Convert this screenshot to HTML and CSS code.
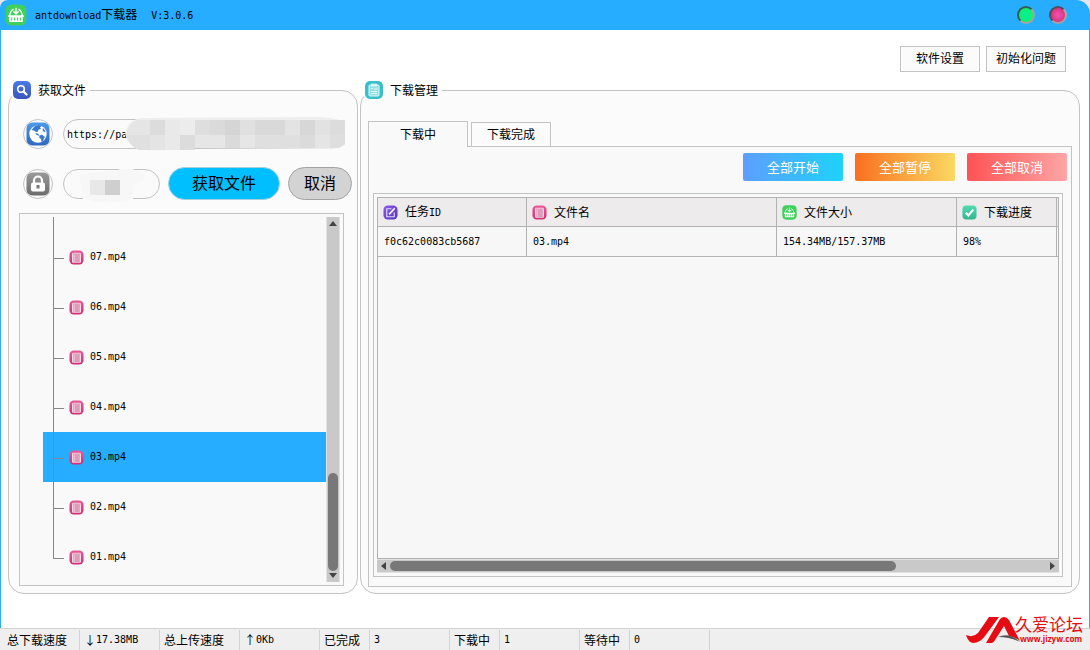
FILE: index.html
```html
<!DOCTYPE html>
<html lang="zh-CN">
<head>
<meta charset="utf-8">
<title>antdownload下载器</title>
<link rel="stylesheet" href="styles.css">
</head>
<body>
<svg class="defs" aria-hidden="true">
  <defs>
    <linearGradient id="gPink" x1="0" y1="0" x2="0" y2="1"><stop offset="0" stop-color="#e85a9a"/><stop offset="1" stop-color="#cf2f74"/></linearGradient>
    <linearGradient id="gBlue" x1="0" y1="0" x2="0" y2="1"><stop offset="0" stop-color="#4a7ae2"/><stop offset="1" stop-color="#3a55bd"/></linearGradient>
    <linearGradient id="gGlobe" x1="0" y1="0" x2="0" y2="1"><stop offset="0" stop-color="#4c9aea"/><stop offset="1" stop-color="#2f68bd"/></linearGradient>
    <linearGradient id="gGray" x1="0" y1="0" x2="0" y2="1"><stop offset="0" stop-color="#9a9a9a"/><stop offset="1" stop-color="#6c6c6c"/></linearGradient>
    <linearGradient id="gViolet" x1="0" y1="0" x2="1" y2="1"><stop offset="0" stop-color="#8a5cf0"/><stop offset="1" stop-color="#5634b4"/></linearGradient>
    <linearGradient id="gMint" x1="0" y1="0" x2="0" y2="1"><stop offset="0" stop-color="#4fdcae"/><stop offset="1" stop-color="#34b58c"/></linearGradient>
    <symbol id="file" viewBox="0 0 16 16">
      <rect x=".5" y=".5" width="15" height="15" rx="4.5" fill="url(#gPink)"/>
      <rect x="3.2" y="3" width="9.6" height="10.5" rx="1" fill="#f6dbe6"/>
      <rect x="6" y="4.5" width="5.5" height="8.5" fill="#dc9cba"/>
      <path d="M4 4.2h8.5M5 4v9" stroke="#e28bb2" stroke-width=".8"/>
    </symbol>
    <symbol id="basket" viewBox="0 0 22 22">
      <rect x=".5" y=".5" width="21" height="21" rx="6" fill="#3fcf5b"/>
      <path d="M8.500 5.200C6 6.500 5 8.500 4.600 12M13.500 5.200C16 6.500 17 8.500 17.400 12" stroke="#fff" stroke-width="1.300" fill="none"/>
      <path d="M11 3.800v5.500M8.300 7.200L11 9.900l2.700-2.700" stroke="#fff" stroke-width="1.400" fill="none"/>
      <path d="M3.200 11.200h15.600v1.900h-1V18H4.200v-4.900h-1z" fill="#fff"/>
      <path d="M6.700 13.600v3M9.600 13.600v3M12.500 13.600v3M15.400 13.600v3" stroke="#3fcf5b" stroke-width="1.100"/>
    </symbol>
    <symbol id="search" viewBox="0 0 18 18">
      <rect width="18" height="18" rx="5" fill="url(#gBlue)"/>
      <circle cx="8" cy="8" r="3.300" fill="none" stroke="#fff" stroke-width="1.600"/>
      <path d="M10.500 10.500L13.500 13.500" stroke="#fff" stroke-width="2.200" stroke-linecap="round"/>
    </symbol>
    <symbol id="clip" viewBox="0 0 18 18">
      <rect width="18" height="18" rx="5" fill="#38bfc9"/>
      <rect x="4" y="4" width="10" height="11" rx="1" fill="#8fdfe4" stroke="#e5fafb"/>
      <path d="M7 2.500v3M9 2.500v3M11 2.500v3" stroke="#fff" stroke-width="1.200"/>
      <path d="M6 7.500h2M9 8h3.500M6 10.500h6M6 12.500h6" stroke="#e9fbfc"/>
    </symbol>
    <symbol id="globe" viewBox="0 0 24 24">
      <rect x=".5" y=".5" width="23" height="23" rx="6" fill="url(#gGlobe)"/>
      <circle cx="12" cy="12" r="8.700" fill="#fff"/>
      <path d="M9 4l3.500-1 3 1-1.500 1.500 1 1.500-2.500.5-.5 2-2 .5L8 8.500 5.500 8z" fill="#3778cc"/>
      <path d="M9.500 11l2 .5 2 1.500-1 .7-2.500-1.200z" fill="#3778cc"/>
      <path d="M13.500 13.500l2.500-.8 3 2.300-1.300 1.800-.4 2.400-1.800.8-.5-3-1.800-1.500zM17 6l2.700 3.500-1.700.5-1.500-2z" fill="#3778cc"/>
    </symbol>
    <symbol id="lock" viewBox="0 0 24 24">
      <rect x=".5" y=".5" width="23" height="23" rx="6" fill="url(#gGray)"/>
      <path d="M8 11V8.500a4 4 0 0 1 8 0V11" fill="none" stroke="#fff" stroke-width="2.200"/>
      <rect x="5" y="10.500" width="14" height="9" rx="2" fill="#fff"/>
      <path d="M10.500 13h3v3.500h-3z" fill="#777"/>
    </symbol>
    <symbol id="edit" viewBox="0 0 16 16">
      <rect x=".5" y=".5" width="15" height="15" rx="4.500" fill="url(#gViolet)"/>
      <path d="M9 4H4v8.500h8V8" fill="none" stroke="#e4daff" stroke-width="1.200"/>
      <path d="M6.500 10L12.500 3.500" stroke="#fff" stroke-width="1.800"/>
    </symbol>
    <symbol id="check" viewBox="0 0 16 16">
      <rect x=".5" y=".5" width="15" height="15" rx="4" fill="url(#gMint)"/>
      <path d="M4 8.200l2.800 3L12 5" fill="none" stroke="#fff" stroke-width="2.200"/>
    </symbol>
  </defs>
</svg>

<div class="window">
  <header class="titlebar">
    <svg class="app-icon"><use href="#basket"/></svg>
    <h1 class="app-name"><span class="latin">antdownload</span>下载器<span class="latin version">V:3.0.6</span></h1>
    <button class="orb orb-green" aria-label="最小化"></button>
    <button class="orb orb-red" aria-label="关闭"></button>
  </header>

  <main class="content">
    <div class="toolbar">
      <button class="plain">软件设置</button>
      <button class="plain">初始化问题</button>
    </div>

    <div class="panels">
      <fieldset class="panel fetch">
        <legend class="caption"><svg class="icon-l"><use href="#search"/></svg>获取文件</legend>
        <div class="row">
          <span class="round"><svg class="icon-xl"><use href="#globe"/></svg></span>
          <div class="field url">
            <input class="pill" type="text" aria-label="链接" value="https://pa">
            <svg class="mask" viewBox="0 0 226 34" preserveAspectRatio="none" aria-hidden="true">
              <path d="M0 16Q4 3 15 1L180 0Q212 -1 220 6V28Q214 32 204 32L70 31Q60 34 14 33Q2 28 0 16z" fill="#eee"/>
              <path d="M1 16Q4 5 13 3H25V18H1z" fill="#e5e5e5"/><path d="M25 3h15v15H25z" fill="#dcdcdc"/><path d="M40 3h15v15H40z" fill="#e9e9e9"/><path d="M55 3h15v15H55z" fill="#ececec"/>
              <path d="M70 3h15v15H70z" fill="#dedede"/><path d="M85 3h15v15H85z" fill="#dadada"/><path d="M100 3h15v15h-15z" fill="#d5d5d5"/><path d="M115 3h15v15h-15z" fill="#e0e0e0"/><path d="M130 3h30v15h-30z" fill="#d9d9d9"/><path d="M160 3h15v15h-15z" fill="#e3e3e3"/><path d="M175 3h15v15h-15z" fill="#d7d7d7"/><path d="M190 3h15v15h-15z" fill="#e2e2e2"/><path d="M205 3h15v15h-15z" fill="#dcdcdc"/>
              <path d="M1 18H25V33H14Q4 29 1 18z" fill="#e0e0e0"/><path d="M25 18h15v15H25z" fill="#e4e4e4"/><path d="M40 18h15v15H40z" fill="#e9e9e9"/><path d="M55 18h15v15H55z" fill="#dcdcdc"/><path d="M70 18h30v13H70z" fill="#e6e6e6"/><path d="M100 18h15v13h-15z" fill="#dadada"/><path d="M115 18h15v13h-15z" fill="#e6e6e6"/><path d="M130 18h45v13h-45z" fill="#dfdfdf"/><path d="M175 18h15v13h-15z" fill="#dbdbdb"/><path d="M190 18h15v13h-15z" fill="#e5e5e5"/><path d="M205 18h15v9l-6 4h-9z" fill="#dedede"/>
            </svg>
          </div>
        </div>
        <div class="row">
          <span class="round"><svg class="icon-xl"><use href="#lock"/></svg></span>
          <div class="field code">
            <input class="pill" type="text" aria-label="提取码">
            <svg class="mask" viewBox="0 0 68 36" aria-hidden="true">
              <path d="M0 8Q20 4 36 4Q48-2 60 5Q68 8 64 14L54 18L54 32Q28 38 4 32z" fill="#f7f7f7"/>
              <path d="M11 13h15v15H11z" fill="#e8e8e8"/><path d="M26 13h15v15H26z" fill="#cfcfcf"/>
            </svg>
          </div>
          <button class="big primary">获取文件</button>
          <button class="big cancel">取消</button>
        </div>
        <div class="tree">
          <ul class="files">
            <li class="file"><span class="branch"></span><svg class="icon-s"><use href="#file"/></svg><span class="latin">07.mp4</span></li>
            <li class="file"><span class="branch"></span><svg class="icon-s"><use href="#file"/></svg><span class="latin">06.mp4</span></li>
            <li class="file"><span class="branch"></span><svg class="icon-s"><use href="#file"/></svg><span class="latin">05.mp4</span></li>
            <li class="file"><span class="branch"></span><svg class="icon-s"><use href="#file"/></svg><span class="latin">04.mp4</span></li>
            <li class="file selected"><span class="branch"></span><svg class="icon-s"><use href="#file"/></svg><span class="latin">03.mp4</span></li>
            <li class="file"><span class="branch"></span><svg class="icon-s"><use href="#file"/></svg><span class="latin">02.mp4</span></li>
            <li class="file"><span class="branch"></span><svg class="icon-s"><use href="#file"/></svg><span class="latin">01.mp4</span></li>
          </ul>
          <div class="vbar">
            <svg class="arrow-v" viewBox="0 0 8 5"><path d="M4 0l4 5H0z"/></svg>
            <span class="vspace"></span><span class="vthumb"></span>
            <svg class="arrow-v" viewBox="0 0 8 5"><path d="M4 5l4-5H0z"/></svg>
          </div>
        </div>
      </fieldset>

      <fieldset class="panel downloads">
        <legend class="caption"><svg class="icon-l"><use href="#clip"/></svg>下载管理</legend>
        <div class="tabs" role="tablist">
          <button class="tab active" role="tab" aria-selected="true">下载中</button>
          <button class="tab" role="tab" aria-selected="false">下载完成</button>
        </div>
        <div class="sheet">
          <div class="actions">
            <button class="action start">全部开始</button>
            <button class="action pause">全部暂停</button>
            <button class="action stop">全部取消</button>
          </div>
          <div class="frame">
            <div class="grid">
              <table class="tasks">
                <colgroup><col class="c-id"><col class="c-name"><col class="c-size"><col class="c-progress"><col></colgroup>
                <thead>
                  <tr>
                    <th><span class="head"><svg class="icon-s"><use href="#edit"/></svg><span>任务<span class="latin">ID</span></span></span></th>
                    <th><span class="head"><svg class="icon-s"><use href="#file"/></svg>文件名</span></th>
                    <th><span class="head"><svg class="icon-s"><use href="#basket"/></svg>文件大小</span></th>
                    <th><span class="head"><svg class="icon-s"><use href="#check"/></svg>下载进度</span></th>
                    <td></td>
                  </tr>
                </thead>
                <tbody>
                  <tr class="latin"><td>f0c62c0083cb5687</td><td>03.mp4</td><td>154.34MB/157.37MB</td><td>98%</td><td></td></tr>
                </tbody>
              </table>
            </div>
            <div class="hbar">
              <svg class="arrow-h" viewBox="0 0 5 8"><path d="M0 4l5-4v8z"/></svg>
              <span class="hthumb"></span><span class="hspace"></span>
              <svg class="arrow-h" viewBox="0 0 5 8"><path d="M5 4L0 0v8z"/></svg>
            </div>
          </div>
        </div>
      </fieldset>
    </div>
  </main>

  <footer class="status">
    <span class="seg wide first">总下载速度</span>
    <span class="seg wide">↓<span class="latin">17.38MB</span></span>
    <span class="seg wide">总上传速度</span>
    <span class="seg wide">↑<span class="latin">0Kb</span></span>
    <span class="seg">已完成</span>
    <span class="seg wide"><span class="latin">3</span></span>
    <span class="seg">下载中</span>
    <span class="seg wide"><span class="latin">1</span></span>
    <span class="seg">等待中</span>
    <span class="seg wide"><span class="latin">0</span></span>
  </footer>

  <div class="brand">
    <svg class="brand-mark" viewBox="0 0 54 27" aria-hidden="true">
      <path d="M23 0h10L19 19Q14 26 7 26Q2 25 0 18Q7 21 12 16z" fill="#e60a12"/>
      <path d="M20 26L34 2Q36 0 38 0Q41 0 43 3L54 24Q49 20 43 19L38 9L29 23Q28 25 26 26z" fill="#e60a12"/>
      <path d="M32 20Q44 15 54 25Q44 20 32 20z" fill="#555"/>
    </svg>
    <div class="brand-text"><span class="brand-name">久爱论坛</span><span class="brand-url">www.jizyw.com</span></div>
  </div>
</div>
</body>
</html>
```
FILE: styles.css
```css
* { box-sizing: border-box; }
body {
  margin: 0;
  background: #e4e6ee;
  color: #000;
  font: 12px/16px "Noto Sans CJK SC", sans-serif;
}
button, input { font: inherit; color: inherit; margin: 0; padding: 0; }
svg { display: block; flex: none; }
.defs { position: absolute; width: 0; height: 0; }
.latin { font-family: "DejaVu Sans Mono", monospace; font-size: 10px; }

.icon-s { width: 15px; height: 15px; }
.icon-l { width: 18px; height: 18px; }
.icon-xl { width: 24px; height: 24px; }

.window { position: relative; display: flex; flex-direction: column; min-height: 100vh; }

.titlebar {
  display: flex;
  align-items: center;
  height: 30px;
  padding: 0 23px 0 5px;
  background: #26adff;
  border-radius: 8px 14px 0 0;
}
.app-icon { width: 22px; height: 22px; }
.app-name { flex: 1; margin: 0 0 0 8px; font-size: 12px; font-weight: normal; }
.version { margin-left: 14px; }
.orb { width: 18px; height: 18px; border: 2px solid; border-radius: 50%; }
.orb + .orb { margin-left: 14px; }
.orb-green { background: radial-gradient(#00ef98, #1cf05c); border-color: #345b50 #a5a5a0 #a5a5a0 #345b50; }
.orb-red { background: radial-gradient(#f950b4, #c42d68); border-color: #5b4a5a #b8a0a8 #a8a0a0 #5b4a5a; }

.content {
  flex: 1;
  display: flex;
  flex-direction: column;
  gap: 8px;
  padding: 16px 9px 34px 7px;
  background: #fff;
  border: solid #26adff;
  border-width: 0 1px;
}
.toolbar { display: flex; justify-content: flex-end; gap: 6px; padding-right: 14px; }
.plain { width: 80px; height: 26px; padding-bottom: 2px; background: #fbfbfb; border: 1px solid #c3c3c3; }

.panels { flex: 1; display: grid; grid-template-columns: 350px 1fr; gap: 2px; }
.panel {
  display: flex;
  flex-direction: column;
  min-width: 0;
  margin: 0;
  background: #fbfbfb;
  border: 1px solid #c3c3c3;
  border-radius: 16px;
}
.caption {
  display: flex;
  align-items: center;
  gap: 7px;
  height: 20px;
  padding: 0 4px 1px 1px;
}
.fetch { padding: 19px 5px 7px 10px; }
.fetch .caption { margin-left: -7px; }
.downloads { padding: 21px 7px 6px; }
.downloads .caption { margin-left: -4px; }

.row { display: flex; align-items: center; padding-left: 4px; margin-bottom: 18px; }
.row + .row { margin-bottom: 13px; }
.round {
  display: grid;
  place-items: center;
  width: 30px;
  height: 30px;
  margin-right: 10px;
  border: 1px solid #c3c3c3;
  border-radius: 50%;
}
.field { position: relative; }
.url { flex: 1; margin-right: 8px; }
.code { width: 97px; margin-right: 8px; }
.pill {
  display: block;
  width: 100%;
  height: 30px;
  padding: 0 3px;
  background: #fafafa;
  border: 1px solid #c3c3c3;
  border-radius: 15px;
  font: 10px "DejaVu Sans Mono", monospace;
}
.mask { position: absolute; }
.url .mask { left: 62px; top: -2px; width: 226px; height: 34px; }
.code .mask { left: 16px; top: -2px; width: 68px; height: 36px; }
.big { height: 33px; border-radius: 17px; font-size: 16px; line-height: 24px; padding-bottom: 4px; }
.primary { width: 112px; margin-right: 8px; background: #00bfff; border: 1px solid #a8cfe0; }
.cancel { width: 64px; background: #d3d3d3; border: 1px solid #a2a2a2; }

.tree {
  flex: 1;
  display: flex;
  margin-right: 8px;
  padding: 3px;
  background: #f9f9f9;
  border: 1px solid #c3c3c3;
}
.files { flex: 1; margin: 0; padding: 0 0 0 20px; list-style: none; }
.files::before { content: ""; display: block; height: 15px; margin-left: 10px; border-left: 1px solid #868686; }
.file { display: flex; align-items: center; height: 50px; padding-left: 10px; }
.selected { background: #26adff; }
.branch { align-self: stretch; width: 11px; margin-right: 5px; border-left: 1px solid #868686; }
.branch::after { content: ""; display: block; height: 26px; border-bottom: 1px solid #868686; }
.file:last-child .branch { align-self: flex-start; }
.file .latin { margin-left: 6px; }

.vbar {
  display: flex;
  flex-direction: column;
  align-items: center;
  gap: 2px;
  width: 14px;
  padding: 4px 0;
  background: #c9c9c9;
  border: solid #e2e2e2;
  border-width: 0 1px;
}
.arrow-v { width: 8px; height: 5px; fill: #444; }
.arrow-h { width: 5px; height: 8px; fill: #444; }
.vspace { flex: 242; }
.vthumb { flex: 98; width: 10px; background: #787878; border-radius: 5px; }

.tabs { display: flex; align-items: flex-end; gap: 3px; }
.tab {
  position: relative;
  width: 80px;
  height: 24px;
  padding-bottom: 2px;
  background: #fbfbfb;
  border: 1px solid #c3c3c3;
  border-bottom: 0;
}
.active { width: 100px; height: 26px; margin-bottom: -1px; background: #f9f9f9; }
.sheet {
  flex: 1;
  display: flex;
  flex-direction: column;
  gap: 12px;
  padding: 6px 8px 9px 4px;
  background: #f9f9f9;
  border: 1px solid #c3c3c3;
}
.actions { display: flex; justify-content: flex-end; gap: 12px; margin-right: -4px; }
.action { width: 100px; height: 28px; border: 0; border-radius: 2px; color: #fff; font-size: 13px; }
.start { background: linear-gradient(90deg, #5e9eff, #1dd3f9); }
.pause { background: linear-gradient(90deg, #f96f20, #fad961); }
.stop { background: linear-gradient(90deg, #ff5254, #ffa5a5); }

.frame { flex: 1; display: flex; flex-direction: column; padding: 3px; border: 1px solid #c3c3c3; background: #f9f9f9; }
.grid { flex: 1; background: #f7f7f7; border: 1px solid #b2b2b2; }
.tasks { width: 100%; table-layout: fixed; border-collapse: separate; border-spacing: 0; }
.c-id { width: 149px; }
.c-name { width: 250px; }
.c-size { width: 180px; }
.c-progress { width: 100px; }
.tasks th, .tasks td {
  height: 30px;
  padding: 0 6px;
  border: solid #b2b2b2;
  border-width: 0 1px 1px 0;
  font-weight: normal;
  text-align: left;
  white-space: nowrap;
}
.tasks th:last-child, .tasks td:last-child { border-right: 0; padding: 0; }
.tasks thead th, .tasks thead td { height: 29px; background: #edebec; padding-left: 5px; }
.head { display: flex; align-items: center; gap: 7px; }

.hbar {
  display: flex;
  align-items: center;
  gap: 4px;
  height: 14px;
  padding: 0 4px;
  background: #c9c9c9;
  border: solid #e2e2e2;
  border-width: 1px 0;
}
.hthumb { flex: 507; height: 10px; background: #787878; border-radius: 5px; }
.hspace { flex: 146; }

.status {
  display: flex;
  height: 22px;
  padding-top: 1px;
  background: #efefef;
  border-top: 1px solid #d3d3d3;
}
.seg {
  display: flex;
  align-items: center;
  width: 50px;
  padding-left: 4px;
  border-right: 1px solid #d3d3d3;
  white-space: nowrap;
}
.wide { width: 80px; }
.first { padding-left: 7px; }

.brand { position: absolute; right: 7px; bottom: 6px; display: flex; align-items: flex-end; color: #e60a12; }
.brand-mark { width: 54px; height: 27px; margin-right: -5px; }
.brand-text { display: flex; flex-direction: column; }
.brand-name { font-size: 17px; line-height: 20px; font-weight: 400; }
.brand-url { font: bold 8px/10px "Open Sans", sans-serif; padding-left: 5px; }
```
